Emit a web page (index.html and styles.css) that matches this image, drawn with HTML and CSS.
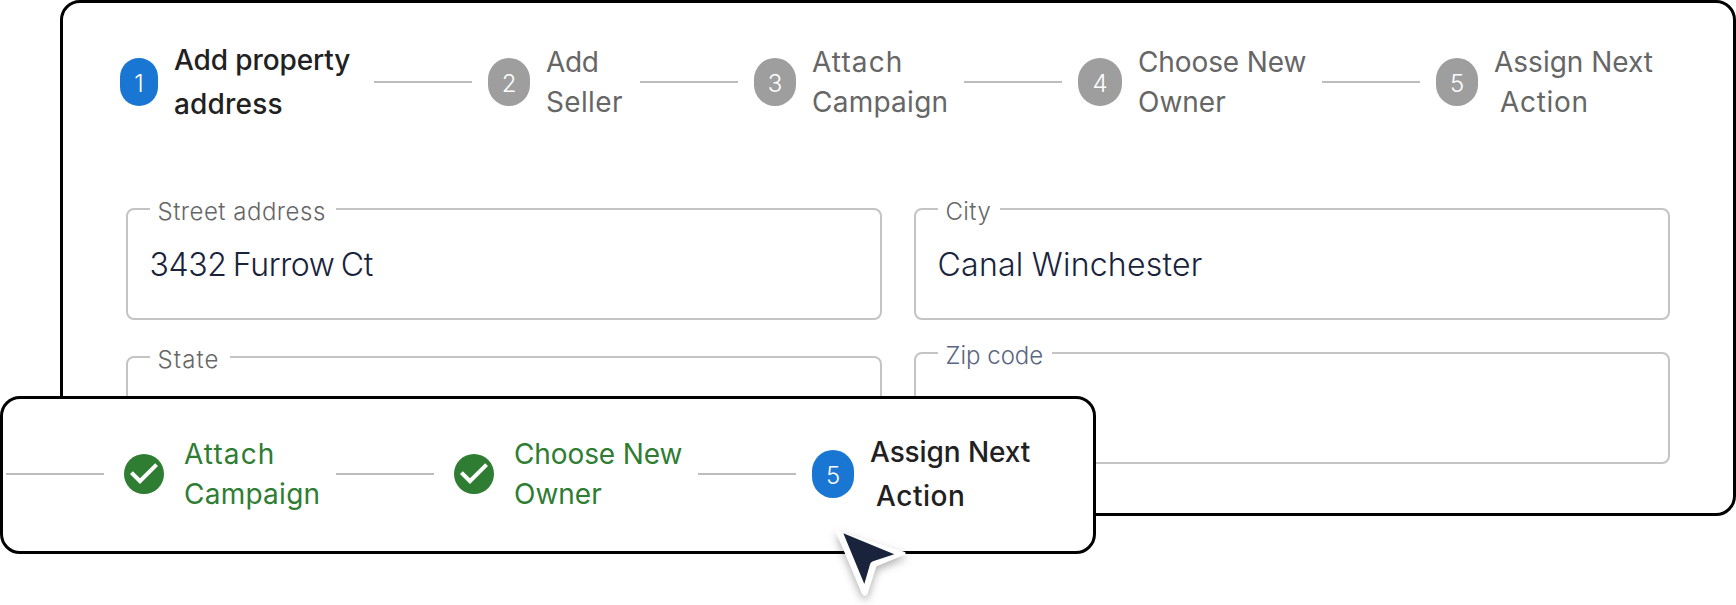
FILE: index.html
```html
<!DOCTYPE html>
<html lang="en">
<head>
<meta charset="utf-8">
<title>Add property</title>
<link rel="stylesheet" href="styles.css">
</head>
<body>
<main class="stage">
  <section class="card">
    <div class="stepper">
      <div class="step step-active"><span class="badge badge-narrow">1</span><span class="label w-property"><span class="t-property">Add property</span><br><span class="t-address">address</span></span></div>
      <i class="line"></i>
      <div class="step"><span class="badge">2</span><span class="label w-seller"><span class="t-add">Add</span><br><span class="t-seller">Seller</span></span></div>
      <i class="line"></i>
      <div class="step"><span class="badge">3</span><span class="label w-campaign"><span class="t-attach">Attach</span><br><span class="t-campaign">Campaign</span></span></div>
      <i class="line"></i>
      <div class="step"><span class="badge badge-wide">4</span><span class="label w-owner"><span class="t-choose">Choose New</span><br><span class="t-owner">Owner</span></span></div>
      <i class="line"></i>
      <div class="step"><span class="badge">5</span><span class="label w-action"><span class="t-assign">Assign Next</span><br><span class="t-action">Action</span></span></div>
    </div>
    <div class="fields">
      <div class="column">
        <div class="field"><span class="caption n-street"><span class="t-street">Street address</span></span><span class="value t-furrow">3432 Furrow Ct</span></div>
        <div class="field"><span class="caption n-state"><span class="t-state">State</span></span></div>
      </div>
      <div class="column column-right">
        <div class="field"><span class="caption n-city"><span class="t-city">City</span></span><span class="value t-canal">Canal Winchester</span></div>
        <div class="field"><span class="caption caption-blue n-zip"><span class="t-zip">Zip code</span></span></div>
      </div>
    </div>
  </section>
  <section class="overlay">
    <i class="line"></i>
    <div class="step step-done"><svg class="check" viewBox="0 0 24 24"><path d="M12 2a10 10 0 1 0 0 20 10 10 0 0 0 0-20zm-2 15l-5-5 1.41-1.41L10 14.17l7.59-7.59L19 8z"/></svg><span class="label w-campaign"><span class="t-attach">Attach</span><br><span class="t-campaign">Campaign</span></span></div>
    <i class="line"></i>
    <div class="step step-done"><svg class="check" viewBox="0 0 24 24"><path d="M12 2a10 10 0 1 0 0 20 10 10 0 0 0 0-20zm-2 15l-5-5 1.41-1.41L10 14.17l7.59-7.59L19 8z"/></svg><span class="label w-owner"><span class="t-choose">Choose New</span><br><span class="t-owner">Owner</span></span></div>
    <i class="line"></i>
    <div class="step step-active"><span class="badge">5</span><span class="label w-action"><span class="t-assign-active">Assign Next</span><br><span class="t-action t-action-active">Action</span></span></div>
  </section>
  <svg class="cursor" viewBox="0 0 96 85">
    <path class="cursor-edge" d="M16 11L85 32.5Q86 33.500 84 34.500L56 46L47 74Q44.500 77 42.500 74Z"/>
    <path class="cursor-fill" d="M23.300 13.300L74.300 34.300L53 41.200Q51 41.800 50.200 43.800L44.300 64Z"/>
  </svg>
</main>
</body>
</html>
```
FILE: styles.css
```css
* { box-sizing: border-box; }
body { margin: 0; background: #fff; font-family: Inter, "Liberation Sans", sans-serif; }
.stage { position: relative; width: 1736px; height: 605px; overflow: hidden; }
.card { width: 1676px; height: 516px; margin-left: 60px; padding: 35px 0 0 57px; border: 3px solid #000; border-radius: 20px; background: #fff; }
.stepper, .overlay, .step { display: flex; align-items: center; }
.stepper { height: 88px; gap: 16px; }
.step { gap: 16px; flex: none; }
.line { flex: none; width: 98px; height: 2px; background: #bdbdbd; }
.badge { flex: none; width: 42px; height: 48px; padding-top: 2px; border-radius: 24px; background: #9e9e9e; color: #fff; font-size: 24px; font-weight: 300; line-height: 48px; text-align: center; }
.badge-narrow { width: 38px; }
.badge-wide { width: 44px; }
.label { color: #666; font-size: 28px; line-height: 40px; white-space: nowrap; }
.step-active .badge { background: #1976d2; }
.step-active .label { color: #212121; font-weight: 500; line-height: 44px; }
.step-done .label { color: #2e7d32; }
.w-property { width: 184px; }
.w-seller { width: 78px; }
.w-campaign { width: 136px; }
.w-owner { width: 168px; }
.w-action { width: 164px; }
.t-property, .t-choose, .t-assign-active { letter-spacing: -0.1px; }
.t-address { letter-spacing: 0.2px; }
.t-add { letter-spacing: -0.3px; }
.t-seller { letter-spacing: 0.35px; }
.t-attach { letter-spacing: 1.1px; }
.t-campaign { letter-spacing: 0.25px; }
.t-action { margin-left: 6px; letter-spacing: 0.7px; }
.t-action-active { letter-spacing: 0.55px; }
.fields { display: flex; gap: 32px; margin-top: 82px; margin-left: 6px; }
.column { display: grid; gap: 36px; width: 756px; align-content: start; }
.column-right { gap: 32px; }
.field { position: relative; height: 112px; padding: 33px 0 0 21.5px; border: 2px solid #c4c4c4; border-radius: 8px; }
.caption { position: absolute; top: -14px; left: 22px; height: 32px; padding-left: 7.5px; background: #fff; color: #666; font-size: 24px; font-weight: 340; line-height: 32px; white-space: nowrap; }
.caption-blue { color: #5a6680; }
.n-street { width: 186px; }
.n-state { width: 80px; }
.n-city { width: 62px; }
.n-zip { width: 114px; }
.t-street { letter-spacing: 0.5px; }
.t-state { letter-spacing: 1.1px; }
.t-city { letter-spacing: 0.4px; }
.value { color: #19233c; font-size: 32px; font-weight: 340; line-height: 44px; }
.t-furrow { letter-spacing: -0.35px; word-spacing: -2.500px; }
.t-canal { letter-spacing: 0.25px; word-spacing: -1px; }
.overlay { position: absolute; left: 0; top: 396px; width: 1096px; height: 158px; padding: 0 0 2px 3px; gap: 16px; border: 3px solid #000; border-radius: 20px; background: #fff; }
.check { width: 48px; height: 48px; fill: #2e7d32; }
.cursor { position: absolute; left: 820px; top: 520px; width: 96px; height: 85px; filter: drop-shadow(0 4px 4px rgba(0,0,0,.3)); }
.cursor-edge { fill: #fff; stroke: #fff; stroke-width: 1; }
.cursor-fill { fill: #19233c; }
```
